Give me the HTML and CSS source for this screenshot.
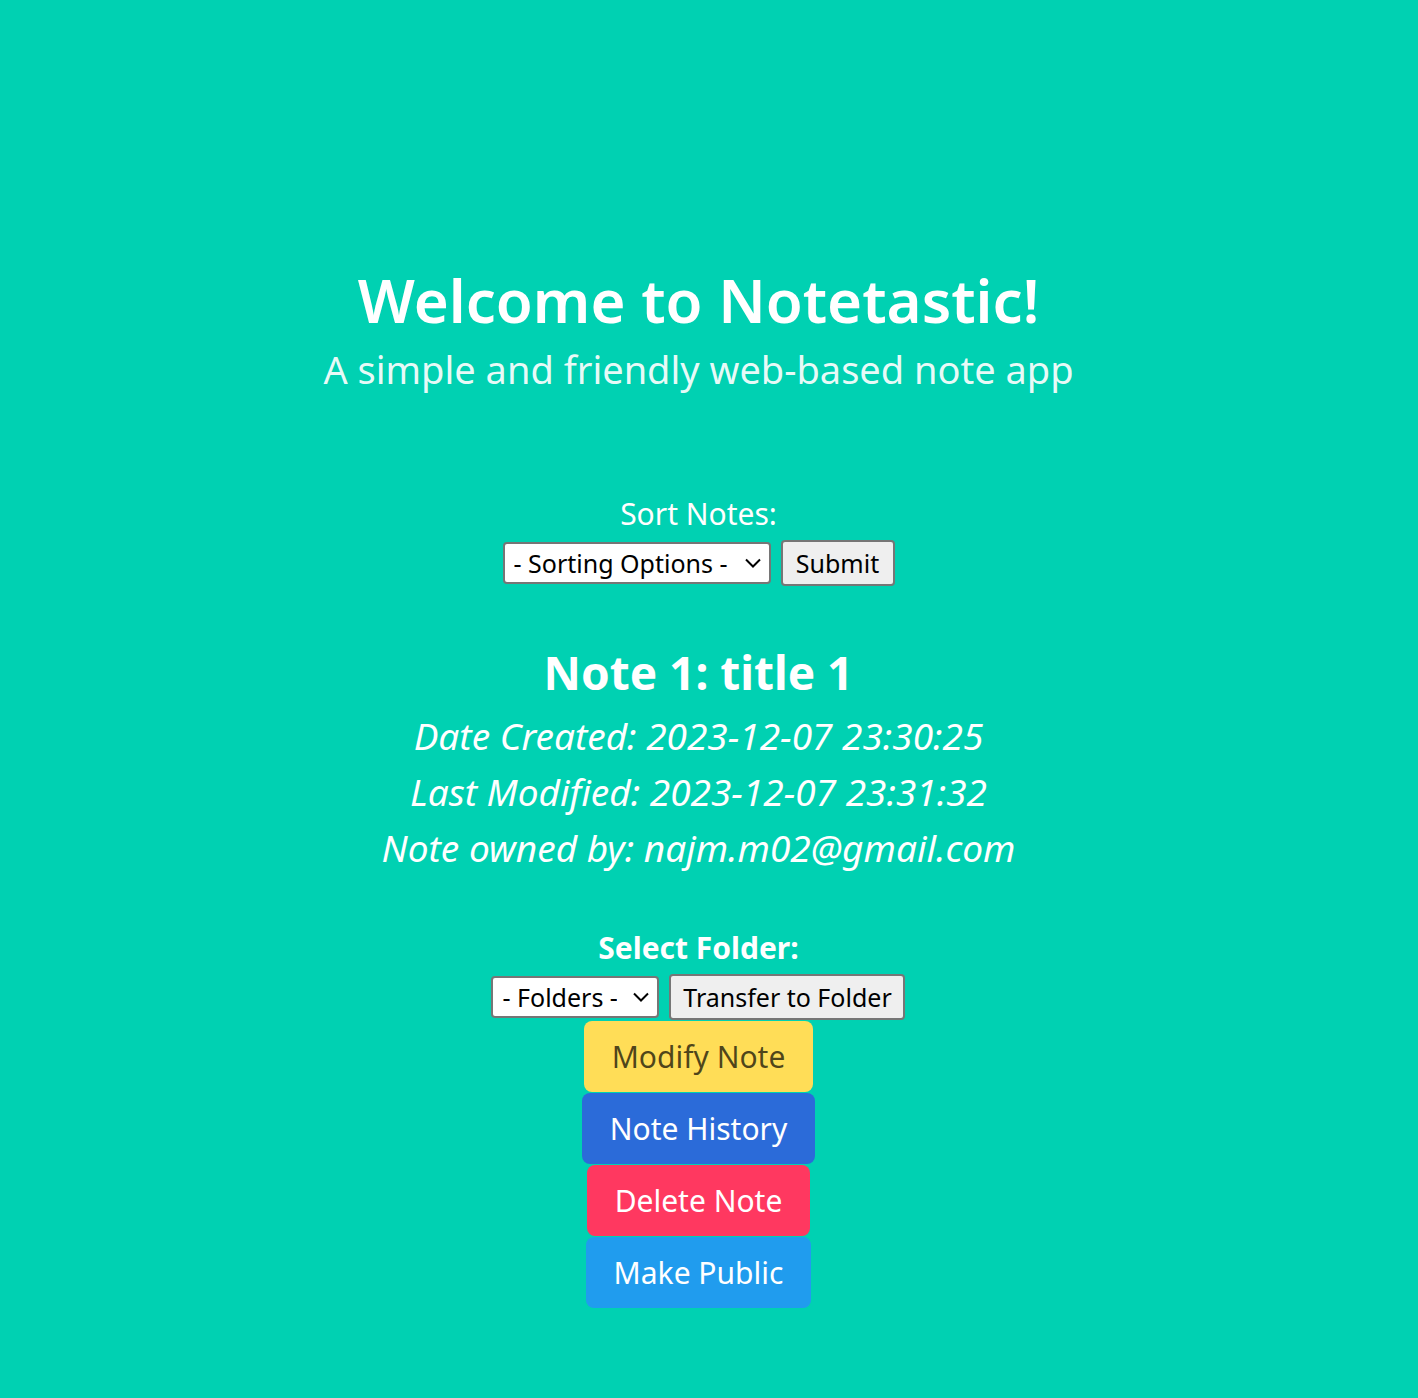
FILE: index.html
```html
<!DOCTYPE html>
<html lang="en">
<head>
<meta charset="utf-8">
<title>Notetastic</title>
<link rel="stylesheet" href="styles.css">
</head>
<body>
<section class="hero">
  <div class="hero-body">
    <h1 class="title">Welcome to Notetastic!</h1>
    <h2 class="subtitle">A simple and friendly web-based note app</h2>

    <form class="sort-form">
      <label class="sort-label">Sort Notes:</label>
      <div class="control-row">
        <span class="select-wrap sort-select">
          <select>
            <option>- Sorting Options -</option>
          </select>
          <svg class="chev" viewBox="0 0 16 10" width="16" height="10"><path d="M1 1.5 L8 8.5 L15 1.5" fill="none" stroke="#000" stroke-width="2"/></svg>
        </span>
        <button type="button" class="native-btn submit-btn">Submit</button>
      </div>
    </form>

    <div class="note">
      <h3 class="note-title">Note 1: title 1</h3>
      <p class="meta">Date Created: 2023-12-07 23:30:25</p>
      <p class="meta">Last Modified: 2023-12-07 23:31:32</p>
      <p class="meta">Note owned by: najm.m02@gmail.com</p>

      <form class="folder-form">
        <label class="folder-label">Select Folder:</label>
        <div class="control-row">
          <span class="select-wrap folder-select">
            <select>
              <option>- Folders -</option>
            </select>
            <svg class="chev" viewBox="0 0 16 10" width="16" height="10"><path d="M1 1.5 L8 8.5 L15 1.5" fill="none" stroke="#000" stroke-width="2"/></svg>
          </span>
          <button type="button" class="native-btn transfer-btn">Transfer to Folder</button>
        </div>
      </form>

      <div class="actions">
        <button type="button" class="btn btn-warning">Modify Note</button>
        <button type="button" class="btn btn-link">Note History</button>
        <button type="button" class="btn btn-danger">Delete Note</button>
        <button type="button" class="btn btn-info">Make Public</button>
      </div>
    </div>
  </div>
</section>
</body>
</html>
```

FILE: styles.css
```css
html, body {
  margin: 0;
  padding: 0;
}
body {
  background: #00d1b2;
  font-family: "Noto Sans", "Open Sans", sans-serif;
  color: #fff;
  min-height: 1398px;
}
.hero {
  min-height: 1398px;
  padding-right: 21px;
}
.hero-body {
  padding-top: 264px;
  display: flex;
  flex-direction: column;
  align-items: center;
  text-align: center;
}
.title {
  margin: 0;
  font-size: 60px;
  font-weight: 600;
  line-height: 72px;
  color: #fff;
}
.subtitle {
  margin: 8px 0 0;
  font-size: 38px;
  font-weight: 400;
  line-height: 50px;
  color: rgba(255, 255, 255, 0.92);
}
.sort-form {
  margin-top: 100px;
  display: flex;
  flex-direction: column;
  align-items: center;
}
.sort-label, .folder-label {
  display: block;
  font-size: 30px;
  line-height: 40px;
  height: 40px;
}
.folder-label {
  font-weight: 700;
}
.control-row {
  margin-top: 6px;
  display: flex;
  align-items: center;
  gap: 10px;
  height: 46px;
}
.select-wrap {
  position: relative;
  display: block;
  height: 42px;
}
.select-wrap select {
  appearance: none;
  -webkit-appearance: none;
  height: 42px;
  box-sizing: border-box;
  border: 2px solid #767676;
  border-radius: 4px;
  background: #fff;
  color: #000;
  font-family: inherit;
  font-size: 25px;
  padding: 0 40px 0 9px;
  margin: 0;
}
.sort-select select { width: 268px; }
.folder-select select { width: 168px; }
.chev {
  position: absolute;
  right: 10px;
  top: 16px;
  pointer-events: none;
}
.native-btn {
  height: 46px;
  box-sizing: border-box;
  border: 2px solid #767676;
  border-radius: 4px;
  background: #efefef;
  color: #000;
  font-family: inherit;
  font-size: 25px;
  padding: 0;
  margin: 0;
  white-space: nowrap;
}
.submit-btn { width: 114px; }
.transfer-btn { width: 236px; }
.note {
  margin-top: 58px;
  display: flex;
  flex-direction: column;
  align-items: center;
}
.note-title {
  margin: 0;
  font-size: 46px;
  font-weight: 700;
  line-height: 56px;
  color: #fff;
}
.meta {
  margin: 12px 0 0;
  font-size: 37px;
  font-style: italic;
  line-height: 48px;
}
.meta + .meta {
  margin-top: 8px;
}
.folder-form {
  margin-top: 56px;
  display: flex;
  flex-direction: column;
  align-items: center;
}
.actions {
  margin-top: 1px;
  display: flex;
  flex-direction: column;
  align-items: center;
  gap: 1px;
}
.btn {
  height: 71px;
  border: none;
  border-radius: 8px;
  font-family: inherit;
  font-size: 30px;
  padding: 0 28px;
  color: #fff;
  margin: 0;
}
.btn-warning {
  background: #ffdd57;
  color: rgba(0, 0, 0, 0.7);
}
.btn-link { background: #2b6bd9; }
.btn-danger { background: #ff3860; }
.btn-info { background: #209cee; }
```
